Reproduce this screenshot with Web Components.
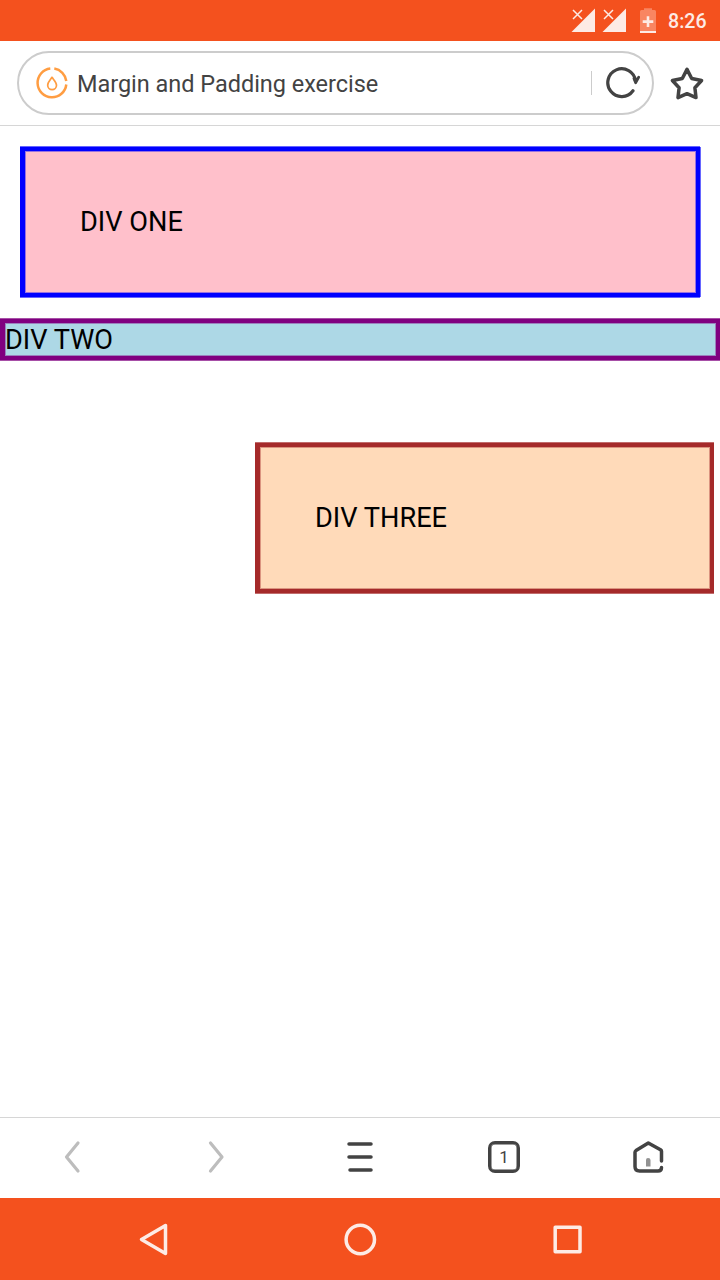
<!DOCTYPE html>
<html lang="en">
<head>
<meta charset="utf-8">
<title>Margin and Padding exercise</title>
<style>
html,body{margin:0;height:100%;background:#fff}
body{font-family:Roboto,"Liberation Sans",sans-serif;overflow:hidden}
</style>
</head>
<body>
<phone-screen>
  <status-bar slot="top">8:26</status-bar>
  <address-bar slot="top">Margin and Padding exercise</address-bar>
  <box-demo style="--m:21px 20px 22px;--p:55px;--h:32px;--bg:pink;--bc:blue;--edge:#0000ff99;--soft:#0000ff66;--right:#0000ff99">DIV ONE</box-demo>
  <box-demo style="--m:0;--p:1px 0 0;--h:32px;--bg:lightblue;--bc:purple;--edge:#800080b0;--soft:#80008066">DIV TWO</box-demo>
  <box-demo style="--m:83px 6px 0 255px;--p:55px;--h:32px;--bg:peachpuff;--bc:brown;--edge:#a52a2ab0;--soft:#a52a2a66">DIV THREE</box-demo>
  <tool-bar slot="bottom">1</tool-bar>
  <system-nav slot="bottom"></system-nav>
</phone-screen>
<script>
const define = (name, html) => customElements.define(name, class extends HTMLElement {
  constructor() {
    super();
    const t = document.createElement('template');
    t.innerHTML = html;
    this.attachShadow({mode: 'open'}).append(t.content.cloneNode(true));
  }
});

define('phone-screen', `
<style>
:host{display:flex;flex-direction:column;width:720px;height:1280px;background:#fff}
main{flex:1;min-height:0;display:flow-root}
</style>
<slot name="top"></slot><main><slot></slot></main><slot name="bottom"></slot>`);

define('status-bar', `
<style>
:host{display:flex;box-sizing:border-box;height:41px;background:#f4511e;color:#fdebe5;justify-content:flex-end;align-items:center;padding-right:14px;font-size:19.600px;font-weight:500;line-height:41px}
svg{display:block;margin-right:12px}
span{display:block;width:38px;white-space:nowrap;padding-top:1px;box-sizing:border-box}
</style>
<svg width="86" height="41" viewBox="570 0 86 41">
  <g fill="#fdebe5"><path d="M595 8.5V32H571.5ZM626 8.5V32H602.500Z"/></g>
  <g stroke="#f4511e" stroke-width="3"><path d="M573 10l9 9m0-9l-9 9M604 10l9 9m0-9l-9 9"/></g>
  <g stroke="#fdebe5" stroke-width="1.500"><path d="M573 10l9 9m0-9l-9 9M604 10l9 9m0-9l-9 9"/></g>
  <path d="M640 31V11.500Q640 10 641.500 10H644V8.300H652V10H654.500Q656 10 656 11.500V31Z" fill="#f98561"/>
  <path d="M640 31H656V33H640Z" fill="#fdebe5"/>
  <path d="M648 16.300V27M642.700 21.600H653.300" stroke="#fdebe5" stroke-width="2.600"/>
</svg><span><slot></slot></span>`);

define('address-bar', `
<style>
:host{display:flex;box-sizing:border-box;height:85px;border-bottom:1px solid #d6d6d6;padding:10px 15px 10px 17px;align-items:center;justify-content:space-between;background:#fff}
.pill{box-sizing:border-box;width:637px;height:64px;border:2px solid #ccc;border-radius:32px;display:flex;align-items:center;padding:0 12px 0 17px}
.title{flex:1;padding:2px 0 0 8px;font-size:23.500px;line-height:30px;color:#434343;white-space:nowrap;letter-spacing:-.03px}
i{width:1px;height:24px;background:#ccc;margin-right:13px}
svg{display:block;fill:none;stroke-linecap:round;stroke-linejoin:round}
</style>
<div class="pill">
  <svg width="33" height="34" viewBox="36 66 33 34" stroke="#ff9d42" stroke-width="2.500">
    <path stroke-linecap="butt" d="M54.300 68.600A14.400 14.400 0 0 1 66.300 81M66.300 84.500A14.400 14.400 0 1 1 50.300 68.600"/>
    <path d="M52 77.300C50.500 79.700 47.700 82.300 47.700 85.200A4.400 4.400 0 0 0 56.500 85.200C56.500 82.300 53.500 79.700 52 77.300Z" stroke-width="1.700"/>
  </svg>
  <div class="title"><slot></slot></div><i></i>
  <svg width="35" height="36" viewBox="605 65 35 36" stroke="#434343" stroke-width="3.200">
    <path d="M633 90.800A13.900 13.900 0 1 1 635.500 81"/>
    <path d="M634 78.500L635.700 82.700L638.600 77.300" stroke-width="2.800" fill="#434343"/>
  </svg>
</div>
<svg width="36" height="36" viewBox="669 65 36 36" stroke="#434343" stroke-width="3.500">
  <path d="M687 69.400L691.700 78.500L701.600 80.500L694.900 87.700L696 97.600L687 93.700L678 97.600L679.100 87.700L672.400 80.500L682.300 78.500Z"/>
</svg>`);

define('box-demo', `
<style>
:host{display:block;margin:var(--m);padding:var(--p);height:var(--h);background:var(--bg);border:solid var(--bc);border-width:4px 4px 4px 5px;box-shadow:0 -1px var(--edge),0 1px var(--edge),1px 0 var(--right,transparent),inset 0 0 0 1px var(--soft);color:#000;font-size:27.200px;line-height:33px;white-space:nowrap}
</style><slot></slot>`);

define('tool-bar', `
<style>
:host{display:grid;grid-template-columns:repeat(5,1fr);box-sizing:border-box;height:81px;border-top:1px solid #d6d6d6;place-items:center;padding-bottom:2px;color:#434343;font-size:17px;background:#fff}
svg{display:block;fill:none;stroke:#434343;stroke-width:3.500;stroke-linecap:round;stroke-linejoin:round}
.off{stroke:#bdbdbd;stroke-width:3.200}
.tab{box-sizing:border-box;width:32px;height:32px;border:3px solid #434343;border-radius:7px;box-shadow:inset 0 0 0 .5px #434343;display:flex;align-items:center;justify-content:center;line-height:20px}
</style>
<svg class="off" width="36" height="36"><path d="M24 4L12.500 18L24 32"/></svg>
<svg class="off" width="36" height="36"><path d="M12.500 4L24 18L12.500 32"/></svg>
<svg width="36" height="36"><path d="M7 5H29M7 18H29M8 31H29"/></svg>
<div class="tab"><slot></slot></div>
<svg width="36" height="36"><path d="M31.500 22V12.300Q31.500 11.500 30.500 10.800L18.300 4L6 11.500Q5 12.300 5 13.300V27.500Q5 32 9.500 32H28Q31.500 32 31.500 28.500"/><path d="M16 27.500V21Q16 19 18 19Q20.500 19 20.500 21V27.500Z" fill="#929292" stroke="none"/></svg>`);

define('system-nav', `
<style>
:host{display:flex;height:82px;background:#f4511e;align-items:center;justify-content:space-between;padding:0 134px}
svg{display:block;fill:none;stroke:#fdebe5;stroke-width:3.500;stroke-linejoin:round}
</style>
<svg width="38" height="38" viewBox="134 1220 38 38"><path d="M165.500 1225.500V1253.500L141.500 1239.500Z"/></svg>
<svg width="38" height="38" viewBox="341 1220 38 38"><circle cx="360.300" cy="1239.500" r="14.200"/></svg>
<svg width="38" height="38" viewBox="548 1220 38 38"><path d="M555.200 1227.200H580V1251.800H555.200Z"/></svg>`);
</script>
</body>
</html>
